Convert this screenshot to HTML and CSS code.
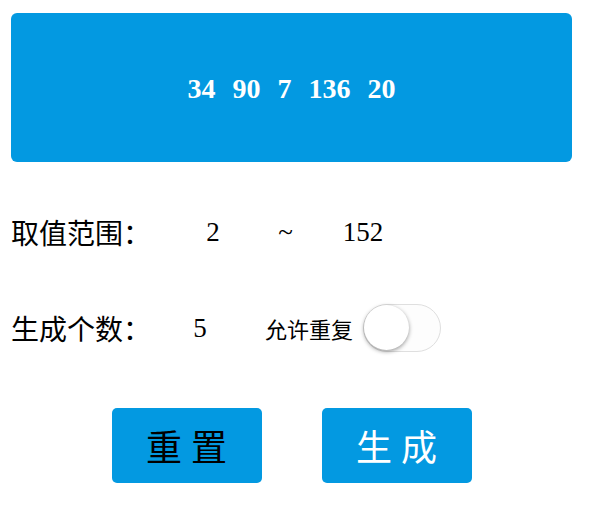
FILE: index.html
```html
<!DOCTYPE html>
<html lang="zh-CN">
<head>
<meta charset="utf-8">
<title>随机数生成</title>
<link rel="stylesheet" href="styles.css">
</head>
<body>
<div class="page">
  <div class="result">
    <span class="num">34</span><span class="num">90</span><span class="num">7</span><span class="num">136</span><span class="num">20</span>
  </div>
  <div class="row row-range">
    <span class="label">取值范围：</span>
    <span class="val val-min">2</span>
    <span class="val val-tilde">~</span>
    <span class="val val-max">152</span>
  </div>
  <div class="row row-count">
    <span class="label">生成个数：</span>
    <span class="val val-count">5</span>
    <span class="repeat">允许重复</span>
    <span class="switch"><span class="knob"></span></span>
  </div>
  <div class="actions">
    <button class="btn btn-reset">重置</button>
    <button class="btn btn-gen">生成</button>
  </div>
</div>
</body>
</html>
```

FILE: styles.css
```css
html, body {
  margin: 0;
  padding: 0;
  background: #ffffff;
}
body {
  font-family: "Noto Sans CJK SC", "Noto Sans", sans-serif;
  color: #000;
}
.page {
  width: 561px;
  padding: 13px 0 0 11px;
}
.result {
  height: 149px;
  background: #0399e1;
  border-radius: 6px;
  display: flex;
  align-items: center;
  justify-content: center;
  gap: 17px;
  color: #fff;
  font-family: "Liberation Serif", serif;
  font-weight: bold;
  font-size: 28px;
}
.result .num {
  display: block;
  line-height: 1;
  padding-top: 2px;
}
.row {
  display: flex;
  align-items: center;
  height: 60px;
}
.row-range {
  margin-top: 40px;
}
.row-count {
  margin-top: 36px;
}
.label {
  width: 150px;
  font-size: 28px;
  line-height: 60px;
  white-space: nowrap;
}
.val {
  font-family: "Liberation Serif", serif;
  font-size: 27px;
  text-align: center;
  line-height: 60px;
}
.val-min { width: 104px; }
.val-tilde { width: 41px; }
.val-max { width: 114px; }
.val-count { width: 78px; }
.repeat {
  margin-left: 26px;
  font-size: 22px;
  line-height: 60px;
  white-space: nowrap;
}
.switch {
  margin-left: 10px;
  position: relative;
  width: 78px;
  height: 48px;
  box-sizing: border-box;
  border: 1.5px solid #dfdfdf;
  border-radius: 24px;
  background: #fdfdfd;
}
.knob {
  position: absolute;
  left: 0;
  top: 0;
  width: 45px;
  height: 45px;
  border-radius: 50%;
  background: #fff;
  box-shadow: 0 1.5px 4.5px rgba(0, 0, 0, 0.4);
}
.actions {
  display: flex;
  justify-content: center;
  gap: 60px;
  margin-top: 50px;
}
.btn {
  width: 150px;
  height: 75px;
  border: none;
  border-radius: 5px;
  background: #0399e1;
  font-family: "Noto Sans CJK SC", sans-serif;
  font-size: 36px;
  letter-spacing: 9px;
  padding: 0 0 0 9px;
  line-height: 75px;
}
.btn-reset { color: #000; }
.btn-gen { color: #fff; }
```
